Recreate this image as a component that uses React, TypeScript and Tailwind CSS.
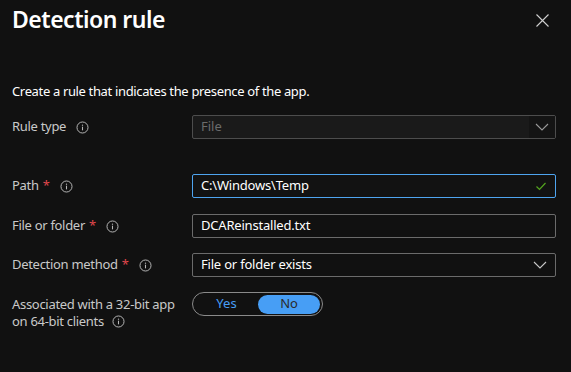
import { Fragment } from 'react';

const InfoIcon = () => (
  <svg width="13" height="13" viewBox="0 0 16 16" fill="none" className="shrink-0">
    <circle cx="8" cy="8" r="6.8" stroke="#b8b8b8" strokeWidth="1.2" />
    <rect x="7.35" y="7" width="1.3" height="4.5" fill="#b8b8b8" />
    <circle cx="8" cy="5.1" r="0.8" fill="#b8b8b8" />
  </svg>
);

const Chevron = ({ color }: { color: string }) => (
  <svg width="14" height="8" viewBox="0 0 14 8" fill="none">
    <path d="M1 1l6 6 6-6" stroke={color} strokeWidth="1.1" />
  </svg>
);

const Label = ({ text, required }: { text: string; required?: boolean }) => (
  <div className="flex items-center w-[180px] shrink-0 text-[13px] tracking-[-0.3px] text-[#c9c9c9]">
    <span>{text}</span>
    {required && <span className="text-[#e0474c] ml-[4px]">*</span>}
    <span className="ml-[10px] flex">
      <InfoIcon />
    </span>
  </div>
);

const App = () => {
  return (
    <div
      className="w-[571px] h-[372px] bg-[#111111] text-white overflow-hidden relative"
      style={{ fontFamily: '"Noto Sans", "Open Sans", sans-serif' }}
    >
      <div className="flex items-start justify-between pl-[12px] pr-[22px] pt-[2px]">
        <h1 className="text-[23px] font-semibold leading-[34px] tracking-[-0.5px]">Detection rule</h1>
        <svg width="13" height="13" viewBox="0 0 13 13" className="mt-[12px]">
          <path d="M0.5 0.5l12 12M12.5 0.5l-12 12" stroke="#d0d0d0" strokeWidth="1.1" />
        </svg>
      </div>

      <p className="pl-[12px] mt-[46px] text-[13px] leading-[18px] tracking-[-0.35px] text-white">
        Create a rule that indicates the presence of the app.
      </p>

      <div className="pl-[12px] pr-[15px] mt-[15px] flex flex-col">
        {/* Rule type */}
        <div className="flex items-center h-[24px]">
          <Label text="Rule type" />
          <div className="flex-1 h-[24px] flex items-stretch border border-[#4d4d4d] rounded-[2px] bg-[#1a1a1a]">
            <span className="flex-1 flex items-center pl-[8px] text-[13px] text-[#6b6b6b]">File</span>
            <span className="w-[26px] flex items-center justify-center bg-[#141414]">
              <Chevron color="#9a9a9a" />
            </span>
          </div>
        </div>

        {/* Path */}
        <div className="flex items-center h-[24px] mt-[35px]">
          <Label text="Path" required />
          <div className="flex-1 h-[24px] flex items-center border border-[#4ea4ef] rounded-[2px] bg-[#121212] pl-[8px] pr-[9px]">
            <span className="flex-1 text-[13px] tracking-[-0.2px] text-white">C:\Windows\Temp</span>
            <svg width="10" height="9" viewBox="0 0 10 9" fill="none">
              <path d="M0.5 4.5l3 3 6-6.5" stroke="#54a51f" strokeWidth="1.2" />
            </svg>
          </div>
        </div>

        {/* File or folder */}
        <div className="flex items-center h-[24px] mt-[16px]">
          <Label text="File or folder" required />
          <div className="flex-1 h-[24px] flex items-center border border-[#6b6b6b] rounded-[2px] pl-[8px]">
            <span className="text-[13px] tracking-[-0.2px] text-white">DCAReinstalled.txt</span>
          </div>
        </div>

        {/* Detection method */}
        <div className="flex items-center h-[24px] mt-[15px]">
          <Label text="Detection method" required />
          <div className="flex-1 h-[24px] flex items-center border border-[#6b6b6b] rounded-[2px] pl-[8px] pr-[8px]">
            <span className="flex-1 text-[13px] tracking-[-0.2px] text-white">File or folder exists</span>
            <Chevron color="#c8c8c8" />
          </div>
        </div>

        {/* 32-bit */}
        <div className="flex items-start mt-[15px]">
          <div className="w-[180px] shrink-0 text-[13px] leading-[17px] tracking-[-0.3px] text-[#c9c9c9] pt-[4px]">
            <div>Associated with a 32-bit app</div>
            <div className="flex items-center">
              <span>on 64-bit clients</span>
              <span className="ml-[8px] flex">
                <InfoIcon />
              </span>
            </div>
          </div>
          <div className="w-[131px] h-[24px] border border-[#8a8a8a] rounded-full flex items-center p-[2px]">
            {['Yes', 'No'].map((opt) => (
              <Fragment key={opt}>
                {opt === 'No' ? (
                  <span className="w-[62px] h-[19px] rounded-full bg-[#479ef5] text-[#2b2b2b] text-[13px] flex items-center justify-center ml-auto">
                    No
                  </span>
                ) : (
                  <span className="flex-1 text-center text-[13px] text-[#479ef5]">Yes</span>
                )}
              </Fragment>
            ))}
          </div>
        </div>
      </div>
    </div>
  );
};

export default App;
